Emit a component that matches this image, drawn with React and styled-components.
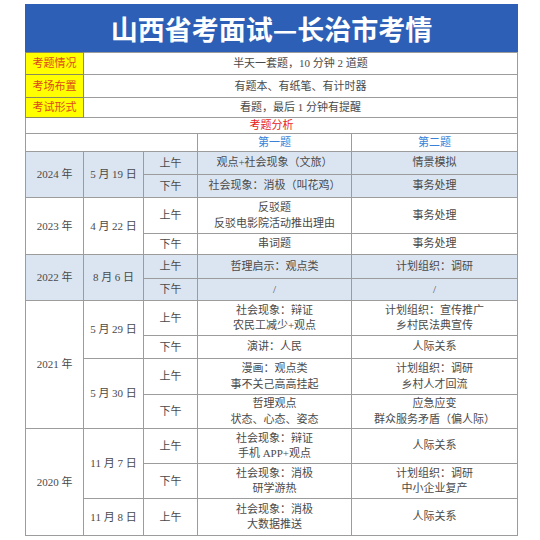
import React from 'react';
import styled, { createGlobalStyle } from 'styled-components';

const GlobalStyle = createGlobalStyle`
  html, body {
    margin: 0;
    padding: 0;
    background: #ffffff;
  }
`;

const info = [
  { label: '考题情况', value: '半天一套题，10 分钟 2 道题', h: 22 },
  { label: '考场布置', value: '有题本、有纸笔、有计时器', h: 23 },
  { label: '考试形式', value: '看题，最后 1 分钟有提醒', h: 20 },
];

const exams = [
  {
    year: '2024 年',
    shade: true,
    days: [
      {
        date: '5 月 19 日',
        sessions: [
          { time: '上午', q1: ['观点+社会现象（文旅）'], q2: ['情景模拟'], h: 23 },
          { time: '下午', q1: ['社会现象：消极（叫花鸡）'], q2: ['事务处理'], h: 23 },
        ],
      },
    ],
  },
  {
    year: '2023 年',
    days: [
      {
        date: '4 月 22 日',
        sessions: [
          { time: '上午', q1: ['反驳题', '反驳电影院活动推出理由'], q2: ['事务处理'], h: 36 },
          { time: '下午', q1: ['串词题'], q2: ['事务处理'], h: 21 },
        ],
      },
    ],
  },
  {
    year: '2022 年',
    shade: true,
    days: [
      {
        date: '8 月 6 日',
        sessions: [
          { time: '上午', q1: ['哲理启示：观点类'], q2: ['计划组织：调研'], h: 24 },
          { time: '下午', q1: ['/'], q2: ['/'], h: 22 },
        ],
      },
    ],
  },
  {
    year: '2021 年',
    days: [
      {
        date: '5 月 29 日',
        sessions: [
          { time: '上午', q1: ['社会现象：辩证', '农民工减少+观点'], q2: ['计划组织：宣传推广', '乡村民法典宣传'], h: 35 },
          { time: '下午', q1: ['演讲：人民'], q2: ['人际关系'], h: 23 },
        ],
      },
      {
        date: '5 月 30 日',
        sessions: [
          { time: '上午', q1: ['漫画：观点类', '事不关己高高挂起'], q2: ['计划组织：调研', '乡村人才回流'], h: 36 },
          { time: '下午', q1: ['哲理观点', '状态、心态、姿态'], q2: ['应急应变', '群众服务矛盾（偏人际）'], h: 34 },
        ],
      },
    ],
  },
  {
    year: '2020 年',
    days: [
      {
        date: '11 月 7 日',
        sessions: [
          { time: '上午', q1: ['社会现象：辩证', '手机 APP+观点'], q2: ['人际关系'], h: 35 },
          { time: '下午', q1: ['社会现象：消极', '研学游热'], q2: ['计划组织：调研', '中小企业复产'], h: 35 },
        ],
      },
      {
        date: '11 月 8 日',
        sessions: [
          { time: '上午', q1: ['社会现象：消极', '大数据推送'], q2: ['人际关系'], h: 37 },
        ],
      },
    ],
  },
];

function Lines({ items }) {
  return items.map((t, i) => <Line key={i}>{t}</Line>);
}

function App() {
  const rows = [];
  exams.forEach(exam => {
    const yearSpan = exam.days.reduce((n, d) => n + d.sessions.length, 0);
    exam.days.forEach((day, di) => {
      day.sessions.forEach((s, si) => {
        rows.push(
          <Row key={exam.year + day.date + s.time} style={{ height: s.h }}>
            {di === 0 && si === 0 && (
              <Cell rowSpan={yearSpan} $shade={exam.shade}>
                {exam.year}
              </Cell>
            )}
            {si === 0 && (
              <Cell rowSpan={day.sessions.length} $shade={exam.shade}>
                {day.date}
              </Cell>
            )}
            <Cell $shade={exam.shade}>{s.time}</Cell>
            <Cell $shade={exam.shade}>
              <Lines items={s.q1} />
            </Cell>
            <Cell $shade={exam.shade}>
              <Lines items={s.q2} />
            </Cell>
          </Row>
        );
      });
    });
  });

  return (
    <Page>
      <GlobalStyle />
      <Sheet>
        <Title>山西省考面试—长治市考情</Title>
        <Table>
          <colgroup>
            <col style={{ width: 58 }} />
            <col style={{ width: 60 }} />
            <col style={{ width: 54 }} />
            <col style={{ width: 154 }} />
            <col style={{ width: 166 }} />
          </colgroup>
          <tbody>
            {info.map(r => (
              <Row key={r.label} style={{ height: r.h }}>
                <LabelCell>{r.label}</LabelCell>
                <Cell colSpan={4}>{r.value}</Cell>
              </Row>
            ))}
            <Row style={{ height: 16 }}>
              <SectionCell colSpan={5}>考题分析</SectionCell>
            </Row>
            <Row style={{ height: 18 }}>
              <Cell colSpan={3} />
              <HeadCell>第一题</HeadCell>
              <HeadCell>第二题</HeadCell>
            </Row>
            {rows}
          </tbody>
        </Table>
      </Sheet>
    </Page>
  );
}

export default App;

const Page = styled.div`
  padding: 4px 0 0 25px;
  font-family: 'Liberation Serif', 'Noto Sans CJK SC', serif;
`;

const Sheet = styled.div`
  width: 493px;
`;

const Title = styled.div`
  height: 48px;
  background: #2d5fb6;
  color: #ffffff;
  font-family: 'Noto Sans CJK SC', sans-serif;
  font-weight: 700;
  font-size: 27px;
  display: flex;
  align-items: center;
  justify-content: center;
`;

const Table = styled.table`
  width: 493px;
  table-layout: fixed;
  border-collapse: collapse;
  border: 1px solid #a8a8a8;
  font-size: 11px;
  color: #4a4a4a;
`;

const Row = styled.tr``;

const Cell = styled.td`
  border: 1px solid #9c9c9c;
  background: ${p => (p.$shade ? '#dbe5f1' : '#ffffff')};
  text-align: center;
  vertical-align: middle;
  padding: 0;
  line-height: 15px;
  white-space: nowrap;
`;

const Line = styled.div`
  line-height: 15.5px;
`;

const LabelCell = styled(Cell)`
  background: #ffff00;
  color: #dc4a1e;
  border-color: #8a8a5a;
`;

const SectionCell = styled(Cell)`
  color: #e8231c;
`;

const HeadCell = styled(Cell)`
  color: #3a82d8;
`;
